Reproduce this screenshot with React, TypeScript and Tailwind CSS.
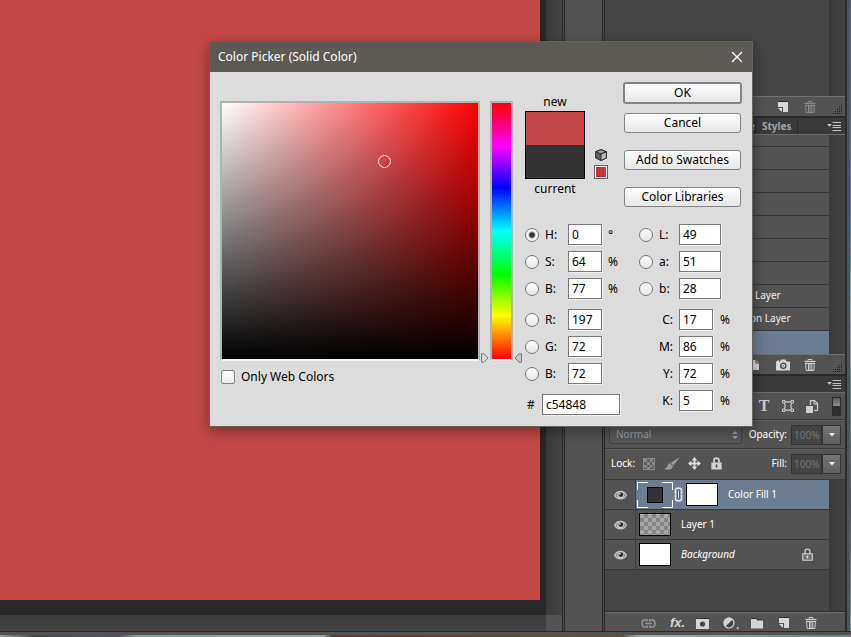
import React from "react";

const ui = "font-['Noto_Sans','Open_Sans',sans-serif]";

/* ---------- icons ---------- */

function NewIcon() {
  return (
    <svg width="12" height="12" viewBox="0 0 12 12" aria-hidden="true">
      <path d="M1 .5H11" stroke="#2c2c2c" />
      <path d="M1 1H11V11H6V6H1Z" fill="#d6d6d6" />
      <path d="M1 7L5 7V11Z" fill="#d6d6d6" />
    </svg>
  );
}

function TrashIcon({ color }: { color: string }) {
  return (
    <svg width="12" height="12" viewBox="0 0 12 12" fill="none" stroke={color} aria-hidden="true">
      <path d="M4 1.5V.5H8V1.5" />
      <path d="M.5 2.5H11.5" strokeWidth="1.4" />
      <path d="M1.5 4L2.2 11.5H9.8L10.5 4M1.5 4.5H10.5M4.5 4.5V11M6 4.5V11M7.8 4.5V11" />
    </svg>
  );
}

function CameraIcon() {
  return (
    <svg width="14" height="12" viewBox="0 0 14 12" aria-hidden="true">
      <path d="M0 2.5H1V1.5H3V2.5H4L5 .5H9.5L10.5 2.5H14V11.5H0Z" fill="#d6d6d6" />
      <circle cx="7.3" cy="6.8" r="2.6" fill="#d6d6d6" stroke="#444" strokeWidth="1.3" />
      <circle cx="7.3" cy="6.8" r=".8" fill="#666" />
    </svg>
  );
}

function PageIcon() {
  return (
    <svg width="12" height="12" viewBox="0 0 12 12" aria-hidden="true">
      <path d="M1 1H6L9 4V11H1Z" fill="#d6d6d6" />
      <path d="M6 1V4H9" fill="none" stroke="#444" />
    </svg>
  );
}

function Grip() {
  const dots: React.ReactNode[] = [];
  for (let row = 0; row < 5; row++) {
    for (let col = 4 - row; col < 5; col++) {
      dots.push(<rect key={`${row}-${col}`} x={col * 2} y={row * 2} width="1" height="1" fill="#1c1c1c" />);
    }
  }
  return (
    <svg width="10" height="10" viewBox="0 0 10 10" aria-hidden="true">
      {dots}
    </svg>
  );
}

function MenuIcon() {
  return (
    <svg width="14" height="9" viewBox="0 0 14 9" aria-hidden="true">
      <path d="M0 2H5L2.5 4.8Z" fill="#c4c4c4" />
      <path d="M5.5 .5H14M5.5 3.5H14M5.5 5.5H14M5.5 8.5H14" stroke="#c4c4c4" />
    </svg>
  );
}

function ShapeIcon() {
  return (
    <svg width="12" height="12" viewBox="0 0 12 12" fill="none" stroke="#cfcfcf" aria-hidden="true">
      <path d="M2 1.8H10M2 10.2H10M2 2.5C3.6 5 3.6 7 2 9.5M10 2.5C8.4 5 8.4 7 10 9.5" strokeWidth="1.2" />
      <path d="M.5 .5H3V3H.5ZM9 .5H11.5V3H9ZM.5 9H3V11.5H.5ZM9 9H11.5V11.5H9Z" fill="#535353" />
    </svg>
  );
}

function SmartIcon() {
  return (
    <svg width="13" height="13" viewBox="0 0 13 13" aria-hidden="true">
      <path d="M4.5 5V.6H8.6L11.5 3.5V10.5H8" fill="none" stroke="#cfcfcf" strokeWidth="1.2" />
      <path d="M8 .6V4H11.5" fill="none" stroke="#cfcfcf" />
      <rect x="0" y="6" width="7" height="7" fill="#cfcfcf" />
    </svg>
  );
}

function EyeIcon() {
  return (
    <svg width="13" height="10" viewBox="0 0 13 10" aria-hidden="true">
      <path d="M.6 5.2C3 0 10 0 12.4 5.2C10 10 3 10 .6 5.2Z" fill="#8c8c8c" stroke="#c9c9c9" strokeWidth="1.2" />
      <circle cx="6.5" cy="4.9" r="3.2" fill="#d0d0d0" />
      <circle cx="6.8" cy="4.6" r="2.3" fill="#262626" />
      <circle cx="5.9" cy="3.8" r=".9" fill="#eee" />
    </svg>
  );
}

function LockIcon({ hollow }: { hollow?: boolean }) {
  return (
    <svg width="11" height="13" viewBox="0 0 11 13" aria-hidden="true">
      <path d="M3 6V3.5C3 .2 8 .2 8 3.5V6" fill="none" stroke="#d2d2d2" strokeWidth={hollow ? 1.2 : 1.7} />
      {hollow ? (
        <path d="M.7 5.7H10.3V12.3H.7Z" fill="#707070" stroke="#d2d2d2" strokeWidth="1.1" />
      ) : (
        <path d="M.3 5.5H10.7V12.5H.3Z" fill="#d2d2d2" />
      )}
      <path d="M5.5 7.5V10.5" stroke={hollow ? "#ddd" : "#444"} strokeWidth="1.5" />
    </svg>
  );
}

function CheckerIcon() {
  return (
    <svg width="12" height="12" viewBox="0 0 12 12" aria-hidden="true">
      <rect x=".5" y=".5" width="11" height="11" fill="#5c5c5c" stroke="#8a8a8a" />
      <path d="M1 1H4V4H1ZM7 1H9.5V4H7ZM4 4H7V7H4ZM9 4H11V7H9ZM1 7H4V9.5H1ZM7 7H9.5V9.5H7ZM4 9H7V11H4Z" fill="#8a8a8a" />
    </svg>
  );
}

function BrushIcon() {
  return (
    <svg width="16" height="13" viewBox="0 0 16 13" aria-hidden="true">
      <path d="M15.8 .2L6.8 5.6L9.4 8.6Z" fill="#9c9c9c" />
      <path d="M6.4 6.4C4 6 3.6 8.4 2.8 10C2 11.2 1 11.6 0 11.8C3 13.4 8.4 13 8.9 9.2Z" fill="#9c9c9c" />
    </svg>
  );
}

function MoveIcon() {
  return (
    <svg width="13" height="13" viewBox="0 0 13 13" aria-hidden="true">
      <path d="M6.5 1V12M1 6.5H12" stroke="#dcdcdc" strokeWidth="1.8" />
      <path d="M6.5 0L9.2 3.4H3.8ZM6.5 13L9.2 9.6H3.8ZM0 6.5L3.4 3.8V9.2ZM13 6.5L9.6 3.8V9.2Z" fill="#dcdcdc" />
    </svg>
  );
}

function ChainIcon() {
  return (
    <svg width="9" height="15" viewBox="0 0 9 15" fill="none" aria-hidden="true">
      <path d="M2.5 6.5H1.5V3C1.5 .5 7.5 .5 7.5 3V6.5H6.5M2.5 8.5H1.5V12C1.5 14.5 7.5 14.5 7.5 12V8.5H6.5" stroke="#dfe3e8" strokeWidth="1.6" />
      <path d="M4.5 4V11" stroke="#2c3440" strokeWidth="2.4" />
      <path d="M4.5 4V11" stroke="#dfe3e8" strokeWidth="1.2" />
    </svg>
  );
}

function LinkIcon() {
  return (
    <svg width="15" height="9" viewBox="0 0 15 9" fill="none" stroke="#929292" strokeWidth="1.6" aria-hidden="true">
      <path d="M6.3 2.6V1H3.5C.2 1 .2 8 3.5 8H6.3V6.4M8.7 2.6V1H11.5C14.8 1 14.8 8 11.5 8H8.7V6.4M4 4.5H11" />
    </svg>
  );
}

function MaskIcon() {
  return (
    <svg width="13" height="11" viewBox="0 0 13 11" aria-hidden="true">
      <path d="M0 .5H13" stroke="#2c2c2c" />
      <rect width="13" height="10" y="1" fill="#d4d4d4" />
      <circle cx="6.5" cy="6" r="2.6" fill="#444" />
    </svg>
  );
}

function AdjustIcon() {
  return (
    <svg width="17" height="13" viewBox="0 0 17 13" aria-hidden="true">
      <circle cx="6" cy="6" r="5" fill="#474747" stroke="#d4d4d4" strokeWidth="1.2" />
      <path d="M9.8 2.2A5.3 5.3 0 1 0 2.2 9.8Z" fill="#d4d4d4" />
      <path d="M13 10.5H16.4L14.7 12.5Z" fill="#d4d4d4" />
    </svg>
  );
}

function FolderIcon() {
  return (
    <svg width="12" height="11" viewBox="0 0 12 11" aria-hidden="true">
      <path d="M0 .5H5.5L6.5 2H12" fill="none" stroke="#2c2c2c" />
      <path d="M0 1H5L6 2.6H12V10.5H0Z" fill="#d4d4d4" />
    </svg>
  );
}

function CubeIcon() {
  return (
    <svg width="12" height="12" viewBox="0 0 12 12" stroke="#222" strokeWidth=".9" strokeLinejoin="round" aria-hidden="true">
      <path d="M6 .6L11.4 2.8V9L6 11.5L.6 9V2.8Z" fill="#5e5e5e" />
      <path d="M6 .6L11.4 2.8L6 5L.6 2.8Z" fill="#999" />
      <path d="M6 5L11.4 2.8V9L6 11.5Z" fill="#b9b9b9" />
    </svg>
  );
}

/* ---------- small controls ---------- */

function Tool({ label, children }: { label: string; children: React.ReactNode }) {
  return (
    <button type="button" aria-label={label} className="flex h-full w-[27px] items-center justify-center">
      {children}
    </button>
  );
}

function Radio({ name, label, checked }: { name: string; label: string; checked?: boolean }) {
  return (
    <input
      type="radio"
      name={name}
      aria-label={label}
      defaultChecked={checked}
      className="h-[14px] w-[14px] shrink-0 appearance-none rounded-full border border-[#777] bg-linear-to-b from-[#fdfdfd] to-[#e6e6e6] checked:bg-[radial-gradient(circle,#333_0_2px,#f6f6f6_4px)]"
    />
  );
}

const boxClass = "h-[21px] border border-[#7a7a7a] bg-white pl-[3px] text-[12px] leading-[19px] text-black shadow-[1px_1px_0_#f0f0f0]";

type FieldProps = { id: string; label: string; value: string; unit?: string; checked?: boolean };

function LeftField({ id, label, value, unit, checked }: FieldProps) {
  return (
    <div className="flex h-[21px] items-center">
      <Radio name="component" label={label} checked={checked} />
      <label htmlFor={id} className="ml-[6px] w-[23px]">{label}</label>
      <input id={id} defaultValue={value} className={`${boxClass} w-[34px]`} />
      <span className="ml-[6px]">{unit}</span>
    </div>
  );
}

function LabField({ id, label, value }: FieldProps) {
  return (
    <div className="flex h-[21px] items-center">
      <Radio name="component" label={label} />
      <label htmlFor={id} className="ml-[6px] w-[20px]">{label}</label>
      <input id={id} defaultValue={value} className={`${boxClass} w-[42px]`} />
    </div>
  );
}

function CmykField({ id, label, value }: FieldProps) {
  return (
    <div className="flex h-[21px] items-center">
      <label htmlFor={id} className="w-[40px] pr-[6px] text-right">{label}</label>
      <input id={id} defaultValue={value} className={`${boxClass} w-[34px]`} />
      <span className="ml-[7px]">%</span>
    </div>
  );
}

function DialogButton({ children, primary }: { children: string; primary?: boolean }) {
  return (
    <button
      type="button"
      className={
        primary
          ? "h-[22px] w-[119px] rounded-[3px] border-2 border-[#848484] bg-linear-to-b from-white to-[#e6e6e6] pb-px leading-[17px]"
          : "mx-px h-[20px] w-[117px] rounded-[3px] border border-[#848484] bg-linear-to-b from-white to-[#e6e6e6] pb-px leading-[17px]"
      }
    >
      {children}
    </button>
  );
}

/* ---------- colour picker ---------- */

function ColorPicker() {
  return (
    <div
      role="dialog"
      aria-labelledby="picker-title"
      className={`absolute left-[209px] top-[41px] w-[544px] border border-[#66635f] bg-[#dcdcdc] text-[12px] leading-[16px] text-black shadow-[0_4px_14px_rgba(0,0,0,0.4)] ${ui}`}
    >
      <div className="flex h-[30px] items-center justify-between bg-[#5d5955] pl-[8px] pr-[9px] text-white">
        <h1 id="picker-title">Color Picker (Solid Color)</h1>
        <button type="button" aria-label="Close">
          <svg width="12" height="12" viewBox="0 0 12 12" stroke="#fff" strokeWidth="1.3" aria-hidden="true">
            <path d="M1 1L11 11M11 1L1 11" />
          </svg>
        </button>
      </div>

      <div className="flex items-start pb-[11px] pl-[10px] pr-[10px] pt-[10px]">
        <div className="pt-[19px]">
          <div className="relative h-[260px] w-[260px] border-2 border-[#b2b2b2] border-b-[#f4f4f4] bg-[linear-gradient(to_top,#000,transparent),linear-gradient(to_right,#fff,#f00)] bg-origin-content">
            <span className="absolute left-[156px] top-[52px] h-[13px] w-[13px] rounded-full border border-white/90" />
          </div>
          <label className="mt-[8px] flex items-center gap-[6px] pl-px">
            <input type="checkbox" className="h-[14px] w-[14px] appearance-none rounded-[2px] border border-[#848484] bg-linear-to-b from-white to-[#ececec]" />
            Only Web Colors
          </label>
        </div>

        <div className="relative ml-[10px] mt-[19px]">
          <input
            type="range"
            min="0"
            max="360"
            defaultValue="0"
            aria-label="Hue"
            className="block h-[260px] w-[23px] appearance-none border-2 border-[#b2b2b2] border-b-[#f4f4f4] bg-[linear-gradient(to_bottom,#f00,#f0f_17%,#00f_33%,#0ff_50%,#0f0_67%,#ff0_83%,#f00)] [writing-mode:vertical-lr] [&::-webkit-slider-thumb]:opacity-0"
          />
          <svg className="absolute -left-[10px] top-[252px]" width="9" height="10" viewBox="0 0 9 10" fill="#dcdcdc" stroke="#777" aria-hidden="true">
            <path d="M1.5 .8H4L8 5L4 9.2H1.5Z" />
          </svg>
          <svg className="absolute -right-[10px] top-[252px]" width="9" height="10" viewBox="0 0 9 10" fill="#c8c8c8" stroke="#777" aria-hidden="true">
            <path d="M7.5 .8H5L1 5L5 9.2H7.5Z" />
          </svg>
        </div>

        <div className="ml-[12px] grow">
          <div className="flex items-start justify-between">
            <div className="flex items-end pt-[12px]">
              <div className="w-[60px] text-center">
                <div>new</div>
                <div className="mt-px h-[68px] border border-black bg-[linear-gradient(to_bottom,#c54848_50%,#333_50%)]" />
                <div className="mt-[2px]">current</div>
              </div>
              <div className="mb-[18px] ml-[9px] flex flex-col items-center gap-[4px]">
                <CubeIcon />
                <button type="button" aria-label="Web safe color" className="h-[14px] w-[14px] border border-[#666] bg-white p-px">
                  <span className="block h-full bg-[#cc3333]" />
                </button>
              </div>
            </div>
            <div className="flex flex-col">
              <DialogButton primary>OK</DialogButton>
              <div className="mb-[17px] mt-[9px] flex">
                <DialogButton>Cancel</DialogButton>
              </div>
              <DialogButton>Add to Swatches</DialogButton>
              <div className="mt-[17px] flex">
                <DialogButton>Color Libraries</DialogButton>
              </div>
            </div>
          </div>

          <div className="mt-[17px] flex gap-[19px]">
            <div className="flex w-[95px] flex-col gap-[6px]">
              <LeftField id="hsb-h" label="H:" value="0" unit="°" checked />
              <LeftField id="hsb-s" label="S:" value="64" unit="%" />
              <LeftField id="hsb-b" label="B:" value="77" unit="%" />
              <div className="mt-[4px] flex flex-col gap-[6px]">
                <LeftField id="rgb-r" label="R:" value="197" />
                <LeftField id="rgb-g" label="G:" value="72" />
                <LeftField id="rgb-b" label="B:" value="72" />
              </div>
              <div className="mt-[4px] flex items-center pl-[2px]">
                <label htmlFor="hex" className="w-[15px]">#</label>
                <input id="hex" defaultValue="c54848" className={`${boxClass} w-[78px]`} />
              </div>
            </div>
            <div className="flex flex-col gap-[6px]">
              <LabField id="lab-l" label="L:" value="49" />
              <LabField id="lab-a" label="a:" value="51" />
              <LabField id="lab-b" label="b:" value="28" />
              <div className="mt-[4px] flex flex-col gap-[6px]">
                <CmykField id="cmyk-c" label="C:" value="17" />
                <CmykField id="cmyk-m" label="M:" value="86" />
                <CmykField id="cmyk-y" label="Y:" value="72" />
                <CmykField id="cmyk-k" label="K:" value="5" />
              </div>
            </div>
          </div>
        </div>
      </div>
    </div>
  );
}

/* ---------- panels ---------- */

const track = "w-[16px] shrink-0 bg-[linear-gradient(to_right,#393939,#434343)]";

function SwatchPanel() {
  return (
    <section>
      <div className="flex h-[96px]">
        <div className="grow bg-[#464646]" />
        <div className={track} />
      </div>
      <div className="flex h-[20px] items-center justify-end border-t border-[#707070] pr-[2px] shadow-[0_-1px_0_#2c2c2c]">
        <Tool label="New style"><NewIcon /></Tool>
        <Tool label="Delete style"><TrashIcon color="#8a8a8a" /></Tool>
        <span className="ml-[10px] mt-[6px]"><Grip /></span>
      </div>
    </section>
  );
}

function TabBar({ children }: { children?: React.ReactNode }) {
  return (
    <div className="flex h-[19px] items-stretch border-b border-t-2 border-b-[#6c6c6c] border-t-[#2a2a2a] bg-[#3a3a3a] pr-[4px]">
      {children}
      <button type="button" aria-label="Panel menu" className="ml-auto flex items-center">
        <MenuIcon />
      </button>
    </div>
  );
}

function HistoryPanel() {
  const rows = ["", "", "", "", "", "", "Layer", "on Layer"];
  return (
    <section>
      <TabBar>
        <span className="w-[151px] border-r border-[#2a2a2a] text-right text-[10px] font-bold leading-[16px] text-[#999]">e</span>
        <span className="w-[42px] border-r border-[#2a2a2a] pl-[6px] text-[10px] font-bold leading-[16px] text-[#a4a4a4]">Styles</span>
      </TabBar>
      <div className="flex">
        <ul className="grow text-[10px] leading-[20px] text-[#f0f0f0]">
          <li className="h-[12px] border-b border-[#363636]" />
          {rows.map((text, i) => (
            <li key={i} className="flex h-[23px] border-b border-[#363636]">
              <span className={text === "Layer" ? "pl-[150px]" : "pl-[145px]"}>{text}</span>
            </li>
          ))}
          <li className="h-[23px] bg-[#6c7c91]" />
        </ul>
        <div className={track} />
      </div>
      <div className="flex h-[20px] items-center justify-end border-t border-[#707070] pr-[2px] shadow-[0_-1px_0_#2c2c2c]">
        <Tool label="New document from state"><PageIcon /></Tool>
        <Tool label="New snapshot"><CameraIcon /></Tool>
        <Tool label="Delete state"><TrashIcon color="#d0d0d0" /></Tool>
        <span className="ml-[10px] mt-[6px]"><Grip /></span>
      </div>
    </section>
  );
}

function Percent({ id, label }: { id: string; label: string }) {
  return (
    <div className="ml-auto flex items-center">
      <label htmlFor={id} className="pr-[4px]">{label}</label>
      <input id={id} defaultValue="100%" className="h-[20px] w-[31px] border border-[#333] bg-[#444] pl-[2px] text-[10px] text-[#777]" />
      <button type="button" aria-label={`${label} slider`} className="flex h-[20px] w-[19px] items-center justify-center border border-[#333] bg-linear-to-b from-[#747474] to-[#606060]">
        <svg width="6" height="4" viewBox="0 0 6 4" aria-hidden="true"><path d="M0 0H6L3 3.5Z" fill="#eee" /></svg>
      </button>
    </div>
  );
}

function LayerRow({ name, selected, italic, locked, children }: { name: string; selected?: boolean; italic?: boolean; locked?: boolean; children: React.ReactNode }) {
  return (
    <li className={`flex h-[30px] border-b border-[#363636] ${italic ? "italic" : ""}`}>
      <button type="button" aria-label={`Show ${name}`} className="flex w-[31px] items-center justify-center border-r border-[#3c3c3c]">
        <EyeIcon />
      </button>
      <div className={`flex grow items-center pr-[16px] ${selected ? "bg-[#6c7c91]" : ""}`}>
        {children}
        <span className="ml-[10px] grow">{name}</span>
        {locked && <LockIcon hollow />}
      </div>
    </li>
  );
}

function LayersPanel() {
  return (
    <section className="flex grow flex-col text-[10px] text-white">
      <TabBar />
      <div className="flex h-[27px] items-center justify-end border-b border-[#3a3a3a] pr-[4px]">
        <button type="button" aria-label="Filter type layers" className="flex w-[24px] justify-center font-['Liberation_Serif',serif] text-[16px] font-bold leading-[18px] text-[#cfcfcf]">T</button>
        <button type="button" aria-label="Filter shape layers" className="flex w-[24px] justify-center"><ShapeIcon /></button>
        <button type="button" aria-label="Filter smart objects" className="flex w-[24px] justify-center"><SmartIcon /></button>
        <button type="button" aria-label="Toggle filter" className="ml-[8px] h-[19px] w-[9px] border border-[#2a2a2a] bg-[linear-gradient(to_bottom,#5c5c5c,#8c8c8c_45%,#2e2e2e_45%)]" />
      </div>
      <div className="flex h-[29px] items-center border-b border-[#3a3a3a] border-t border-t-[#606060] pl-[4px] pr-[4px]">
        <div className="relative flex">
          <select aria-label="Blend mode" className="h-[18px] w-[133px] appearance-none rounded-[2px] border border-[#404040] bg-[#585858] pl-[6px] text-[#a2a2a2]">
            <option>Normal</option>
          </select>
          <svg className="pointer-events-none absolute right-[4px] top-[5px]" width="6" height="8" viewBox="0 0 6 8" aria-hidden="true">
            <path d="M0 3H6L3 0ZM0 5H6L3 8Z" fill="#a2a2a2" />
          </svg>
        </div>
        <Percent id="opacity" label="Opacity:" />
      </div>
      <div className="flex h-[31px] items-center border-b border-[#3a3a3a] border-t border-t-[#606060] pb-[2px] pl-[6px] pr-[4px]">
        <span className="w-[26px]">Lock:</span>
        <div className="flex items-center">
          <button type="button" aria-label="Lock transparency" className="flex w-[23px] justify-center"><CheckerIcon /></button>
          <button type="button" aria-label="Lock pixels" className="flex w-[23px] justify-center"><BrushIcon /></button>
          <button type="button" aria-label="Lock position" className="flex w-[22px] justify-center"><MoveIcon /></button>
          <button type="button" aria-label="Lock all" className="flex w-[22px] justify-center"><LockIcon /></button>
        </div>
        <Percent id="fill" label="Fill:" />
      </div>
      <div className="flex grow border-b border-[#2c2c2c] bg-[#464646]">
        <div className="grow">
          <ul className="bg-[#535353]">
            <LayerRow name="Color Fill 1" selected>
              <span className="relative ml-px flex h-[26px] w-[36px] items-center justify-center">
                <span className="h-[16px] w-[16px] border border-black bg-[#333]" />
                <svg className="absolute inset-0" width="36" height="26" viewBox="0 0 36 26" fill="none" stroke="#fff" aria-hidden="true">
                  <path d="M.5 8V.5H11M25 .5H35.5V8M.5 18V25.5H11M25 25.5H35.5V18" />
                </svg>
              </span>
              <span className="ml-px"><ChainIcon /></span>
              <span className="ml-[3px] h-[23px] w-[32px] border border-black bg-white" />
            </LayerRow>
            <LayerRow name="Layer 1">
              <span className="ml-[3px] h-[23px] w-[32px] border border-black bg-[repeating-conic-gradient(#858585_0_25%,#a8a8a8_0_50%)] bg-size-[8px_8px]" />
            </LayerRow>
            <LayerRow name="Background" italic locked>
              <span className="ml-[3px] h-[23px] w-[32px] border border-black bg-white" />
            </LayerRow>
          </ul>
        </div>
        <div className={track} />
      </div>
      <div className="flex h-[19px] items-center justify-end border-t border-[#707070] pr-[21px] pt-[2px]">
        <Tool label="Link layers"><LinkIcon /></Tool>
        <Tool label="Layer effects">
          <span className="pl-[4px] font-['Liberation_Sans',sans-serif] text-[13px] font-bold italic leading-[14px] text-[#d4d4d4]">fx.</span>
        </Tool>
        <Tool label="Add mask"><MaskIcon /></Tool>
        <Tool label="New adjustment layer"><span className="pl-[4px]"><AdjustIcon /></span></Tool>
        <Tool label="New group"><FolderIcon /></Tool>
        <Tool label="New layer"><NewIcon /></Tool>
        <Tool label="Delete layer"><TrashIcon color="#d0d0d0" /></Tool>
      </div>
    </section>
  );
}

export default function App() {
  return (
    <main className={`relative flex h-screen flex-col overflow-hidden bg-[#535353] ${ui}`}>
      <div className="flex min-h-0 grow">
        <div className="flex min-w-0 grow flex-col">
          <div className="flex grow">
            <div className="flex grow bg-[#282828] pb-[15px] pr-[6px]">
              <div className="grow bg-[#c54848]" />
            </div>
            <div className="w-[16px] bg-[linear-gradient(to_right,#3a3a3a,#454545)]" />
          </div>
          <div className="flex h-[16px]">
            <div className="grow bg-[linear-gradient(to_bottom,#3a3a3a,#454545)]" />
            <div className="w-[16px] bg-[#535353]" />
          </div>
        </div>
        <div className="w-[3px] border-x border-[#2a2a2a] bg-[#4a4a4a]" />
        <div className="w-[37px] bg-[#535353]" />
        <div className="w-[3px] border-x border-[#2a2a2a] bg-[#4a4a4a]" />
        <aside className="flex w-[240px] flex-col">
          <SwatchPanel />
          <HistoryPanel />
          <LayersPanel />
        </aside>
        <div className="w-[5px] border-l-2 border-[#2c2c2c] bg-[#535353]" />
        <div className="w-px bg-[linear-gradient(to_bottom,#1879b8,#2a8fc4_35%,#7fa9a6_50%,#4a5a5c_80%,#7f9a9c)]" />
      </div>
      <div className="h-[4px] border-t border-[#2a2a2a] bg-[#535353]" />
      <div className="h-[2px] bg-[linear-gradient(to_right,#8fa3a0,#3f4f50_4%,#46585a_14%,#7fa3a8_16%,#86a7ab_38%,#5f3a26_39%,#7a4a28_73%,#8fb0b0_75%,#5f8588)]" />
      <ColorPicker />
    </main>
  );
}
